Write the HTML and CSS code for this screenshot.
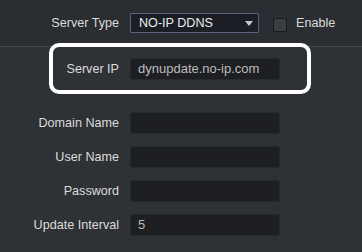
FILE: index.html
```html
<!DOCTYPE html>
<html>
<head>
<meta charset="utf-8">
<link rel="stylesheet" href="styles.css">
</head>
<body>
<div class="page">
  <div class="header">
    <div class="row">
      <span class="label">Server Type</span>
      <div class="field">
        <div class="select"><span>NO-IP DDNS</span><span class="arrow"></span></div>
        <span class="check"></span>
        <span class="enable">Enable</span>
      </div>
    </div>
  </div>
  <div class="form">
    <div class="row first">
      <span class="label">Server IP</span>
      <div class="input">dynupdate.no-ip.com</div>
    </div>
    <div class="row">
      <span class="label">Domain Name</span>
      <div class="input"></div>
    </div>
    <div class="row">
      <span class="label">User Name</span>
      <div class="input"></div>
    </div>
    <div class="row">
      <span class="label">Password</span>
      <div class="input"></div>
    </div>
    <div class="row">
      <span class="label">Update Interval</span>
      <div class="input">5</div>
    </div>
  </div>
  <div class="highlight"></div>
</div>
</body>
</html>
```
FILE: styles.css
```css
html, body {
  margin: 0;
  padding: 0;
  background: #2e3135;
}
.page {
  position: relative;
  width: 362px;
  height: 252px;
  overflow: hidden;
  font-family: "Liberation Sans", Arial, sans-serif;
  background: #2e3135;
}
.header {
  height: 46px;
  background: #2a2d31;
  border-bottom: 1px solid #45484d;
  display: flex;
  align-items: center;
}
.row {
  display: flex;
  align-items: center;
  gap: 11px;
  height: 22px;
}
.label {
  width: 119px;
  text-align: right;
  color: #dcdcdc;
  font-size: 12.6px;
}
.field {
  display: flex;
  align-items: center;
}
.select {
  box-sizing: border-box;
  width: 129px;
  height: 20px;
  background: #1b1e25;
  border: 1px solid #56637a;
  border-radius: 1px;
  color: #ececec;
  font-size: 12.6px;
  display: flex;
  align-items: center;
  justify-content: space-between;
  padding: 0 5px 0 8px;
}
.arrow {
  width: 0;
  height: 0;
  border-left: 4px solid transparent;
  border-right: 4px solid transparent;
  border-top: 5px solid #c4c6ca;
  margin-top: 1px;
}
.check {
  box-sizing: border-box;
  width: 14px;
  height: 14px;
  margin-left: 14px;
  margin-top: 3px;
  background: #3a3d42;
  border: 1px solid #17191c;
  border-radius: 2px;
}
.enable {
  margin-left: 9px;
  color: #dcdcdc;
  font-size: 12.6px;
}
.form {
  padding-top: 11px;
  display: flex;
  flex-direction: column;
  gap: 12px;
}
.form .row.first {
  margin-bottom: 20px;
}
.input {
  box-sizing: border-box;
  width: 150px;
  height: 22px;
  background: #1d1f23;
  border: 1px solid #26292d;
  border-radius: 2px;
  color: #bcbcbc;
  font-size: 13px;
  line-height: 20px;
  padding-left: 7px;
}
.highlight {
  position: absolute;
  left: 49px;
  top: 43px;
  width: 262px;
  height: 51px;
  box-sizing: border-box;
  border: 4px solid #ffffff;
  border-radius: 10px;
}
```
